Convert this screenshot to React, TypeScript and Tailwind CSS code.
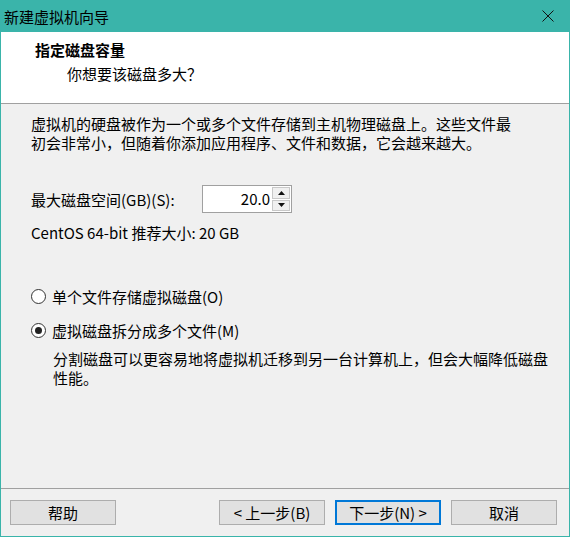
const FONT = "font-['Noto_Sans_CJK_SC','Noto_Sans',sans-serif]"

function Radio({ checked }: { checked: boolean }) {
  return (
    <span className="w-[15px] h-[15px] rounded-full border border-[#333] bg-white flex items-center justify-center shrink-0">
      {checked && <span className="w-[7px] h-[7px] rounded-full bg-[#222]" />}
    </span>
  )
}

function Btn({ label, primary }: { label: string; primary?: boolean }) {
  return (
    <button
      type="button"
      className={`h-[25px] w-[106px] bg-[#e1e1e1] text-[15px] text-black leading-none ${
        primary ? 'border-2 border-[#0078d7]' : 'border border-[#adadad]'
      }`}
    >
      {label}
    </button>
  )
}

export default function App() {
  return (
    <div className={`w-[570px] h-[537px] flex flex-col border-x border-b border-[#3ab4aa] bg-[#f0f0f0] text-black ${FONT}`}>
      {/* title bar */}
      <div className="h-[32px] shrink-0 bg-[#3ab4aa] flex items-center justify-between pl-[3px] pr-[14px]">
        <span className="text-[15px] leading-none">新建虚拟机向导</span>
        <svg width="12" height="12" viewBox="0 0 12 12" className="mr-[1px]">
          <path d="M0.5 0.5 L11.5 11.5 M11.5 0.5 L0.5 11.5" stroke="#111" strokeWidth="1" />
        </svg>
      </div>

      {/* header */}
      <div className="h-[72px] shrink-0 bg-white border-b border-[#a0a0a0] pt-[8px] pl-[34px]">
        <div className="text-[15px] leading-[20px] font-bold">指定磁盘容量</div>
        <div className="mt-[4px] text-[15px] leading-[20px] pl-[32px]">你想要该磁盘多大？</div>
      </div>

      {/* body */}
      <div className="flex-1 pt-[10px] pl-[30px] pr-[20px] text-[15px] leading-[19px]">
        <p>
          虚拟机的硬盘被作为一个或多个文件存储到主机物理磁盘上。这些文件最
          <br />
          初会非常小，但随着你添加应用程序、文件和数据，它会越来越大。
        </p>

        <div className="mt-[33px] h-[28px] flex items-center">
          <span className="w-[171px]">最大磁盘空间(GB)(S):</span>
          <div className="h-[28px] w-[90px] border border-[#a0a0a0] bg-white flex">
            <div className="flex-1 text-right pr-[2px] leading-[26px]">20.0</div>
            <div className="w-[19px] flex flex-col gap-[1px] py-[1px] pr-[1px]">
              <div className="flex-1 bg-[#f0f0f0] border border-[#c8c8c8] flex items-center justify-center">
                <svg width="7" height="4" viewBox="0 0 7 4">
                  <path d="M3.5 0 L7 4 L0 4 Z" fill="#111" />
                </svg>
              </div>
              <div className="flex-1 bg-[#f0f0f0] border border-[#c8c8c8] flex items-center justify-center">
                <svg width="7" height="4" viewBox="0 0 7 4">
                  <path d="M0 0 L7 0 L3.5 4 Z" fill="#111" />
                </svg>
              </div>
            </div>
          </div>
        </div>

        <div className="mt-[10px]">CentOS 64-bit 推荐大小: 20 GB</div>

        <div className="mt-[45px] flex items-center gap-[6px]">
          <Radio checked={false} />
          <span>单个文件存储虚拟磁盘(O)</span>
        </div>
        <div className="mt-[15px] flex items-center gap-[6px]">
          <Radio checked />
          <span>虚拟磁盘拆分成多个文件(M)</span>
        </div>
        <p className="mt-[9px] pl-[22px]">
          分割磁盘可以更容易地将虚拟机迁移到另一台计算机上，但会大幅降低磁盘
          <br />
          性能。
        </p>
      </div>

      {/* footer */}
      <div className="h-[48px] shrink-0 border-t border-[#a0a0a0] pt-[11px] pl-[9px] pr-[12px] flex items-start">
        <Btn label="帮助" />
        <div className="flex-1" />
        <div className="flex gap-[10px]">
          <Btn label="< 上一步(B)" />
          <Btn label="下一步(N) >" primary />
          <Btn label="取消" />
        </div>
      </div>
    </div>
  )
}
